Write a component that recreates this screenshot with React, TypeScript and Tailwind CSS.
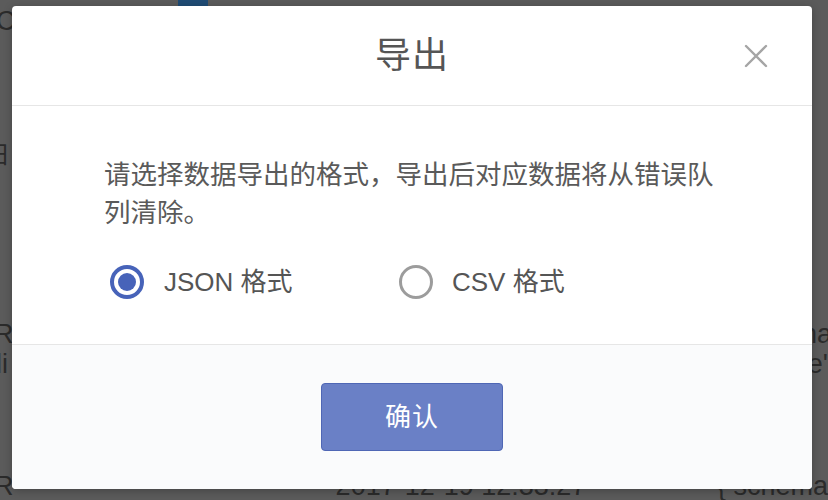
import React from "react";

const font = { fontFamily: '"Liberation Sans", "Noto Sans CJK SC", sans-serif' };

export default function App() {
  return (
    <div className="relative w-[828px] h-[500px] overflow-hidden bg-[#5b5b5b]" style={font}>
      {/* dimmed page behind the dialog, laid out by flow */}
      <div className="w-full h-full flex flex-col text-[#2b2b2b] text-[27px] leading-none whitespace-nowrap">
        <div className="h-[8px] flex">
          <div className="ml-[178px] w-[30px] h-[8px] bg-[#1f4b74]" />
        </div>
        <div className="h-[136px] -ml-[4px]">C</div>
        <div className="h-[180px] -ml-[14px] text-[24px]">日</div>
        <div className="h-[31px] flex justify-between -mx-[6px]">
          <span>R</span>
          <span className="mr-[2px]">na</span>
        </div>
        <div className="h-[123px] flex justify-between -mx-[4px]">
          <span>li</span>
          <span className="mr-[4px]">e'</span>
        </div>
        <div className="flex -ml-[6px]">
          <span className="w-[344px]">R</span>
          <span className="w-[384px]">2017-12-19 12:33:27</span>
          <span>{"{ schema"}</span>
        </div>
      </div>

      {/* dialog (overlay) */}
      <div className="absolute left-[12px] top-[6px] w-[800px] h-[483px] bg-white rounded-[4px] overflow-hidden shadow-[0_2px_8px_rgba(0,0,0,0.25)] flex flex-col">
        <div className="relative h-[100px] shrink-0 flex items-center justify-center border-b border-[#e6e6e6]">
          <span className="text-[36px] text-[#555555] leading-none tracking-[1px]">导出</span>
          <button className="absolute right-[44px] top-[38px] w-[24px] h-[24px] flex items-center justify-center">
            <svg width="24" height="24" viewBox="0 0 24 24">
              <path d="M2 2 L22 22 M22 2 L2 22" stroke="#a5a5a5" strokeWidth="2.4" strokeLinecap="round" />
            </svg>
          </button>
        </div>

        <div className="h-[238px] shrink-0 pt-[50px] pl-[92px] pr-[92px]">
          <p className="text-[26.5px] leading-[38px] text-[#5a5a5a]">
            请选择数据导出的格式，导出后对应数据将从错误队列清除。
          </p>
          <div className="mt-[30px] ml-[6px] flex items-center h-[40px]">
            <label className="w-[289px] flex items-center gap-[20px]">
              <span className="w-[34px] h-[34px] rounded-full border-[4px] border-[#4763b9] flex items-center justify-center">
                <span className="w-[18px] h-[18px] rounded-full bg-[#4763b9]" />
              </span>
              <span className="text-[26px] text-[#555555] leading-none">JSON 格式</span>
            </label>
            <label className="flex items-center gap-[19px]">
              <span className="w-[34px] h-[34px] rounded-full border-[3px] border-[#9c9c9c]" />
              <span className="text-[26px] text-[#555555] leading-none">CSV 格式</span>
            </label>
          </div>
        </div>

        <div className="flex-1 border-t border-[#e6e6e6] bg-[#fafbfc] flex items-center justify-center">
          <button className="w-[182px] h-[68px] rounded-[4px] bg-[#6a80c6] border border-[#4f67b5] text-white text-[26px] tracking-[1px]">
            确认
          </button>
        </div>
      </div>
    </div>
  );
}
